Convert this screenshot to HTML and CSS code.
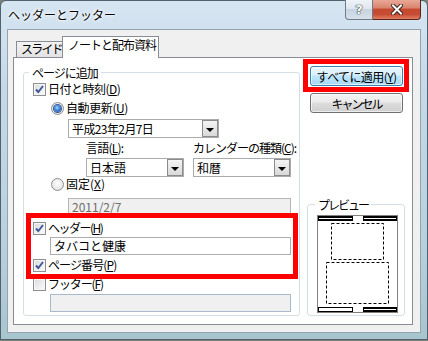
FILE: index.html
```html
<!DOCTYPE html>
<html lang="ja">
<head>
    <meta charset="UTF-8">
    <title>ヘッダーとフッター</title>
    <link rel="stylesheet" href="styles.css">
</head>
<body>
    <div class="window">
        <div class="titlebar">
            <span class="title">ヘッダーとフッター</span>
            <div class="caption-buttons">
                <div class="cap-btn help">?</div>
                <div class="cap-btn close">
                    <svg width="12" height="11" viewBox="0 0 12 11">
                        <path d="M2 1.5 L10 9.5 M10 1.5 L2 9.5" stroke="#3a2420" stroke-width="4" stroke-linecap="square"/>
                        <path d="M2 1.5 L10 9.5 M10 1.5 L2 9.5" stroke="#fff" stroke-width="2" stroke-linecap="square"/>
                    </svg>
                </div>
            </div>
        </div>

        <div class="client">
            <div class="tabs">
                <div class="tab">スライド</div>
                <div class="tab active">ノートと配布資料</div>
            </div>

            <div class="tab-panel">
                <fieldset class="group add-group">
                    <legend>ページに追加</legend>

                    <div class="row">
                        <span class="checkbox checked"></span>
                        <span class="lbl-date">日付と時刻(<u>D</u>)</span>
                    </div>
                    <div class="row option auto">
                        <span class="radio selected"></span>
                        <span class="lbl-auto">自動更新(<u>U</u>)</span>
                    </div>
                    <div class="combo date-combo">
                        <span class="combo-text">平成23年2月7日</span>
                        <span class="drop"></span>
                    </div>
                    <div class="pair pair-labels">
                        <span class="lbl-lang">言語(<u>L</u>):</span>
                        <span class="lbl-calendar">カレンダーの種類(<u>C</u>):</span>
                    </div>
                    <div class="pair pair-combos">
                        <div class="combo">
                            <span class="combo-text">日本語</span>
                            <span class="drop"></span>
                        </div>
                        <div class="combo">
                            <span class="combo-text">和暦</span>
                            <span class="drop"></span>
                        </div>
                    </div>
                    <div class="row option">
                        <span class="radio"></span>
                        <span>固定(<u>X</u>)</span>
                    </div>
                    <div class="textbox fixed-date disabled">2011/2/7</div>

                    <div class="mark header-mark">
                        <div class="row">
                            <span class="checkbox checked"></span>
                            <span class="lbl-header">ヘッダー(<u>H</u>)</span>
                        </div>
                        <div class="textbox header-text">タバコと健康</div>
                        <div class="row page-number">
                            <span class="checkbox checked"></span>
                            <span class="lbl-page">ページ番号(<u>P</u>)</span>
                        </div>
                    </div>

                    <div class="row footer-row">
                        <span class="checkbox"></span>
                        <span class="lbl-footer">フッター(<u>F</u>)</span>
                    </div>
                    <div class="textbox footer-text"></div>
                </fieldset>

                <div class="side">
                    <div class="mark apply-mark">
                        <button class="btn default">すべてに適用(<u>Y</u>)</button>
                    </div>
                    <button class="btn cancel">キャンセル</button>

                    <fieldset class="group preview-group">
                        <legend>プレビュー</legend>
                        <svg class="page" width="81" height="98" viewBox="0 0 81 98">
                            <rect x="0.5" y="0.5" width="80" height="97" fill="#fff" stroke="#808080"/>
                            <rect x="1" y="1" width="35" height="5" fill="#000"/>
                            <rect x="2" y="3" width="33" height="1" fill="#fff"/>
                            <rect x="46" y="1" width="34" height="5" fill="#000"/>
                            <rect x="47" y="3" width="32" height="1" fill="#fff"/>
                            <rect x="14.5" y="8.5" width="52" height="36" fill="none" stroke="#000" stroke-dasharray="3 2"/>
                            <rect x="9.5" y="47.5" width="62" height="41" fill="none" stroke="#000" stroke-dasharray="3 2"/>
                            <rect x="1.5" y="92.5" width="34" height="4" fill="#fff" stroke="#000"/>
                            <rect x="46" y="92" width="34" height="5" fill="#000"/>
                            <rect x="47" y="94" width="32" height="1" fill="#fff"/>
                        </svg>
                    </fieldset>
                </div>
            </div>
        </div>
    </div>
</body>
</html>
```

FILE: styles.css
```css
* {
    margin: 0;
    padding: 0;
    box-sizing: border-box;
}

body {
    width: 428px;
    height: 341px;
    background: #7b8076;
    font-family: "Noto Sans CJK JP", "Noto Sans", sans-serif;
    font-size: 12px;
    color: #000;
    overflow: hidden;
}

/* window frame */

.window {
    width: 428px;
    height: 340px;
    border: 1px solid #52616c;
    border-radius: 6px 6px 0 0;
    background: linear-gradient(#d6e5f2 0%, #c5d9e9 25%, #b9d1df 70%, #a7c5ce 100%);
    padding: 0 6px 6px 6px;
    display: flex;
    flex-direction: column;
}

.titlebar {
    height: 28px;
    display: flex;
    justify-content: space-between;
    align-items: flex-start;
}

.title {
    margin: 6px 0 0 1px;
    line-height: 15px;
    text-shadow: 0 0 5px #fff, 0 0 3px #fff, 0 0 2px #fff;
}

.caption-buttons {
    display: flex;
    margin-top: -1px;
}

.cap-btn {
    height: 20px;
    display: flex;
    align-items: center;
    justify-content: center;
}

.help {
    width: 28px;
    border: 1px solid #6c7c8a;
    border-top: none;
    border-radius: 0 0 0 4px;
    background: linear-gradient(#eef3f8 0%, #dfe7ef 45%, #c7d4df 50%, #d6e1ea 100%);
    font-family: "DejaVu Sans", sans-serif;
    font-weight: bold;
    font-size: 13px;
    color: #fff;
    text-shadow: 0 0 1px #2a3540, 0 0 1px #2a3540, 0 0 1px #2a3540;
}

.close {
    width: 48px;
    border: 1px solid #5a2519;
    border-top: none;
    border-left: none;
    border-radius: 0 0 4px 0;
    background: linear-gradient(#e9a898 0%, #d98670 40%, #c74a2f 50%, #c54b32 75%, #e27f62 100%);
}

/* client area */

.client {
    height: 304px;
    border: 1px solid #94a3ae;
    background: #f0f0f0;
    padding: 6px 7px 7px 5px;
    display: flex;
    flex-direction: column;
}

.tabs {
    height: 22px;
    margin-bottom: -1px;
    padding-left: 3px;
    display: flex;
    align-items: flex-end;
    position: relative;
    z-index: 1;
}

.tab {
    height: 16px;
    width: 46px;
    margin-bottom: 1px;
    padding-left: 4px;
    line-height: 14px;
    letter-spacing: -1.8px;
    border: 1px solid #898c95;
    border-right: none;
    border-bottom: none;
    background: linear-gradient(#f3f3f3, #e2e2e2);
    white-space: nowrap;
}

.tab.active {
    height: 22px;
    width: 97px;
    margin-bottom: 0;
    padding: 1px 0 0 5px;
    letter-spacing: -1px;
    border-right: 1px solid #898c95;
    background: #fff;
}

.tab-panel {
    flex: 1;
    border: 1px solid #898c95;
    background: #fff;
    padding: 1px 0 0 9px;
    display: flex;
    align-items: flex-start;
}

/* group boxes */

.group {
    min-width: 0;
    border: 1px solid #d5dfe5;
    border-radius: 3px;
}

.group legend {
    line-height: 15px;
    padding: 0 3px;
}

.add-group {
    width: 277px;
    margin-top: 6px;
    padding: 2px 8px 3px 9px;
}

.add-group legend {
    margin-left: -4px;
    letter-spacing: -1px;
}

.row {
    height: 14px;
    line-height: 14px;
    display: flex;
    align-items: center;
    gap: 2px;
    white-space: nowrap;
}

.option {
    margin-left: 18px;
}

.auto {
    margin-top: 5px;
}

.lbl-date {
    letter-spacing: -0.5px;
}

.lbl-auto {
    letter-spacing: -0.4px;
}

.lbl-lang {
    letter-spacing: -0.8px;
}

.lbl-calendar {
    letter-spacing: -1px;
}

.lbl-header {
    letter-spacing: -1.5px;
}

.lbl-page {
    letter-spacing: -0.9px;
}

.lbl-footer {
    letter-spacing: -1.1px;
}

.checkbox {
    width: 13px;
    height: 13px;
    border: 1px solid #8e8f8f;
    background: linear-gradient(135deg, #d8dadd 0%, #eeeff0 60%, #fafafa 100%);
    box-shadow: inset 0 0 0 1px #f6f6f6;
    flex-shrink: 0;
}

.checkbox.checked {
    background:
        url("data:image/svg+xml,%3Csvg xmlns='http://www.w3.org/2000/svg' width='11' height='11'%3E%3Cpath d='M2 5.5 L4.3 8 L9 2' fill='none' stroke='%2340569a' stroke-width='1.9'/%3E%3C/svg%3E") center / 11px 11px no-repeat,
        linear-gradient(135deg, #d8dadd 0%, #eeeff0 60%, #fafafa 100%);
}

.radio {
    width: 13px;
    height: 13px;
    border-radius: 50%;
    border: 1px solid #8e8f8f;
    background: radial-gradient(circle at 50% 40%, #fdfdfd 0%, #e6e6e6 70%, #d2d2d2 100%);
    flex-shrink: 0;
    display: flex;
    align-items: center;
    justify-content: center;
}

.radio.selected::after {
    content: "";
    width: 7px;
    height: 7px;
    border-radius: 50%;
    background: radial-gradient(circle at 45% 40%, #a6d8ff 0%, #3c84d8 45%, #1b4a96 100%);
    box-shadow: 0 0 0 1px #37589a;
}

/* combo boxes and text boxes */

.combo {
    height: 19px;
    border: 1px solid #a9abaf;
    background: #fff;
    display: flex;
}

.combo-text {
    flex: 1;
    padding-left: 3px;
    line-height: 17px;
    white-space: nowrap;
}

.drop {
    width: 16px;
    border: 1px solid #8c8c8c;
    background: linear-gradient(#f4f4f4, #d9d9d9);
    display: flex;
    align-items: center;
    justify-content: center;
    padding-top: 3px;
}

.drop::after {
    content: "";
    border-top: 4px solid #000;
    border-left: 4px solid transparent;
    border-right: 4px solid transparent;
}

.date-combo {
    width: 151px;
    margin: 4px 0 0 35px;
}

.date-combo .combo-text {
    letter-spacing: -0.6px;
}

.pair {
    display: grid;
    grid-template-columns: 98px 98px;
    column-gap: 9px;
    margin: 3px 0 0 53px;
}

.pair-labels {
    height: 14px;
    line-height: 14px;
    white-space: nowrap;
}

.textbox {
    height: 18px;
    border: 1px solid #abadb3;
    background: #fff;
    padding-left: 3px;
    line-height: 16px;
    white-space: nowrap;
}

.fixed-date {
    width: 223px;
    height: 19px;
    margin: 7px 0 0 35px;
}

.textbox.disabled {
    background: #f0f0f0;
    border-color: #b5b5b5;
    color: #6d6d6d;
}

.header-text {
    width: 241px;
    margin: 2px 0 0 17px;
}

.page-number {
    margin-top: 3px;
}

.footer-row {
    margin-top: -2px;
}

.footer-text {
    width: 241px;
    margin: 3px 0 0 17px;
    background: #f0f0f0;
    border-color: #aab9ca;
}

/* red annotation frames */

.mark {
    border: 5px solid #ff0000;
    position: relative;
}

.header-mark {
    margin: -4px -7px 0 -7px;
    padding: 3px 2px 2px 2px;
}

/* right column */

.side {
    width: 106px;
    margin-left: 3px;
    display: flex;
    flex-direction: column;
    align-items: flex-start;
}

.apply-mark {
    width: 106px;
    padding: 2px 1px 1px 2px;
}

.btn {
    width: 93px;
    height: 20px;
    border-radius: 3px;
    font-family: inherit;
    font-size: 12px;
    line-height: 17px;
    color: #000;
    text-align: center;
    white-space: nowrap;
}

.btn.default {
    display: block;
    letter-spacing: -0.6px;
    border: 1px solid #3c7fb1;
    background: linear-gradient(#eaf6fd 0%, #d9f0fc 45%, #bee6fd 50%, #a7d9f5 100%);
    box-shadow: inset 0 0 0 1px rgba(255, 255, 255, 0.6);
}

.btn.cancel {
    margin: 1px 0 0 7px;
    letter-spacing: -2px;
    border: 1px solid #707070;
    background: linear-gradient(#f2f2f2 0%, #ebebeb 45%, #dddddd 50%, #cfcfcf 100%);
    box-shadow: inset 0 0 0 1px rgba(255, 255, 255, 0.6);
}

.preview-group {
    width: 98px;
    margin: 84px 0 0 4px;
    padding: 3px 6px 2px 9px;
}

.preview-group legend {
    margin-left: -2px;
    letter-spacing: -2px;
}

.page {
    display: block;
}
```
